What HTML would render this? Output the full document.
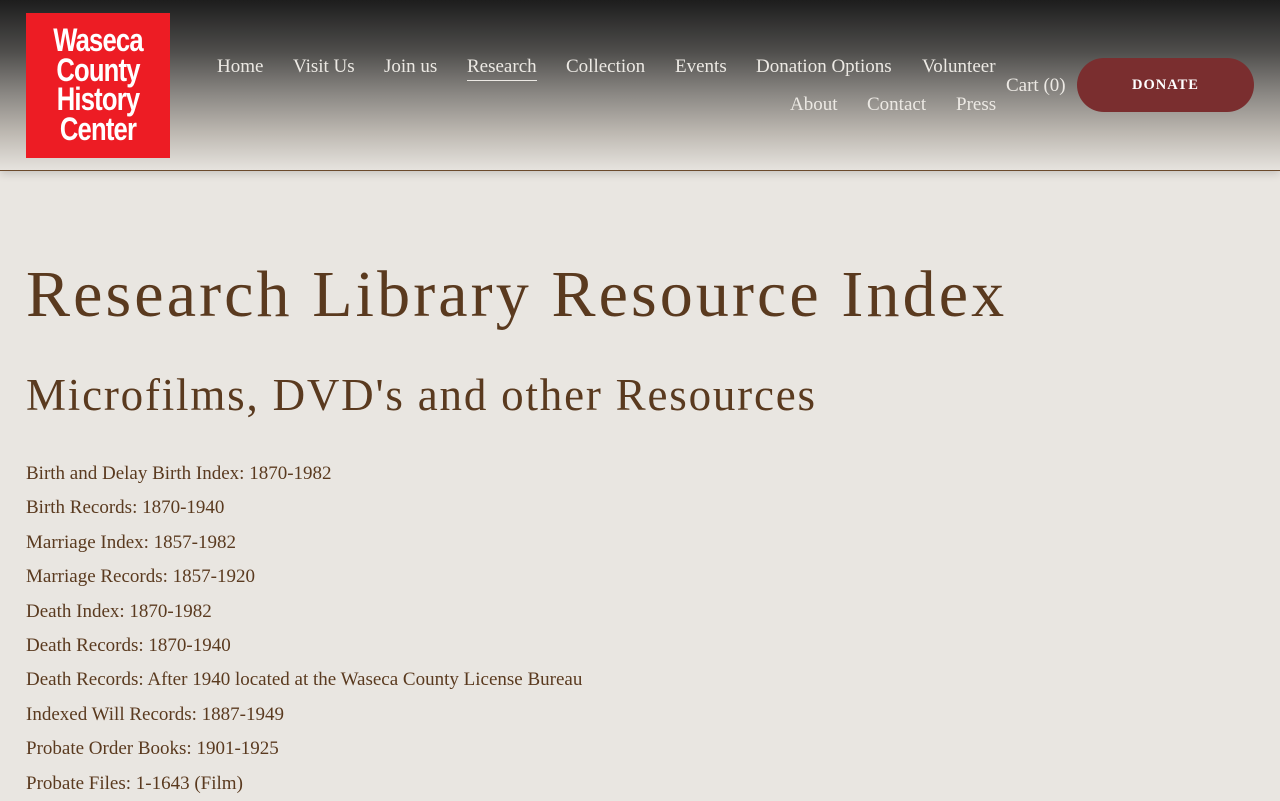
<!DOCTYPE html>
<html><head><meta charset="utf-8"><style>
*{margin:0;padding:0;box-sizing:border-box}
body{width:1280px;height:800px;overflow:hidden;background:#e9e6e1;font-family:"Liberation Serif",serif;color:#5a3a1f}
header{position:absolute;left:0;top:0;width:1280px;height:171px;background:linear-gradient(#1d1d1d 0%,#4e4d4b 30%,#8a8783 55%,#bdb8b1 78%,#e6e3de 100%);border-bottom:1px solid #6b4a2c;box-shadow:0 3px 8px rgba(0,0,0,.15)}
.logo{position:absolute;left:26px;top:13px;width:144px;height:145px;background:#ed1c24;color:#fff;font-family:"Liberation Sans",sans-serif;font-weight:bold;font-size:32px;line-height:29.5px;text-align:center;padding-top:13px;letter-spacing:-1px}
.logo span{display:inline-block;transform:scaleX(.8)}
.nav a{position:absolute;color:#ece9e4;font-size:19px;text-decoration:none;white-space:nowrap}
.u{border-bottom:1.5px solid #ece9e4;padding-bottom:2px}
.donate{position:absolute;left:1077px;top:58px;width:177px;height:54px;border-radius:27px;background:#7a2e2f;color:#fff;font-weight:bold;font-size:14.5px;letter-spacing:1px;text-align:center;line-height:54px}
h1{position:absolute;left:26px;top:257px;font-weight:normal;font-size:66px;letter-spacing:3.1px;white-space:nowrap}
h2{position:absolute;left:26px;top:369px;font-weight:normal;font-size:45px;letter-spacing:1.8px;white-space:nowrap}
.list{position:absolute;left:26px;top:457px;font-size:19px;line-height:34.4px}
</style></head><body>
<header>
<div class="logo"><span>Waseca<br>County<br>History<br>Center</span></div>
<div class="nav">
<a style="left:217px;top:56px">Home</a>
<a style="left:293px;top:56px">Visit Us</a>
<a style="left:384px;top:56px">Join us</a>
<a class="u" style="left:467px;top:56px">Research</a>
<a style="left:566px;top:56px">Collection</a>
<a style="left:675px;top:56px">Events</a>
<a style="left:756px;top:56px">Donation Options</a>
<a style="left:922px;top:56px">Volunteer</a>
<a style="left:790px;top:94px">About</a>
<a style="left:867px;top:94px">Contact</a>
<a style="left:956px;top:94px">Press</a>
<a style="left:1006px;top:75px">Cart (0)</a>
</div>
<div class="donate">DONATE</div>
</header>
<h1>Research Library Resource Index</h1>
<h2>Microfilms, DVD's and other Resources</h2>
<div class="list">
Birth and Delay Birth Index: 1870-1982<br>
Birth Records: 1870-1940<br>
Marriage Index: 1857-1982<br>
Marriage Records: 1857-1920<br>
Death Index: 1870-1982<br>
Death Records: 1870-1940<br>
Death Records: After 1940 located at the Waseca County License Bureau<br>
Indexed Will Records: 1887-1949<br>
Probate Order Books: 1901-1925<br>
Probate Files: 1-1643 (Film)
</div>
</body></html>
